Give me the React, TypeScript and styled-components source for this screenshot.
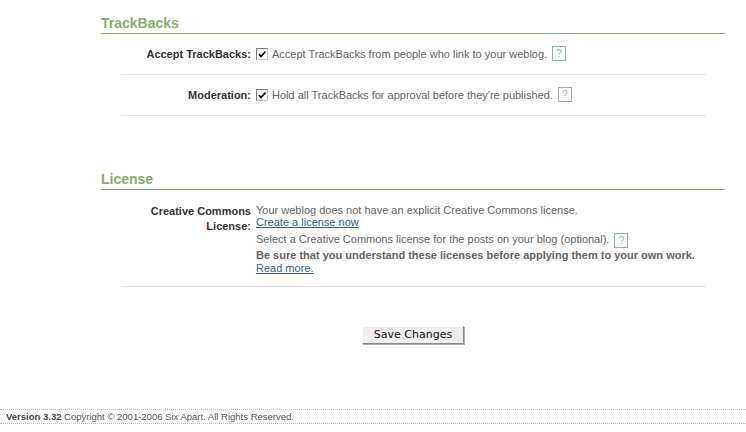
import styled, { createGlobalStyle } from "styled-components";

const GlobalStyle = createGlobalStyle`
  html, body {
    margin: 0;
    padding: 0;
    background: #ffffff;
  }
  body {
    font-family: "Liberation Sans", Arial, sans-serif;
    font-size: 11px;
    color: #636363;
  }
`;

const CheckMark = () => (
  <svg width="10" height="10" viewBox="0 0 10 10">
    <polyline
      points="2,5 4,7.5 8.5,2.5"
      fill="none"
      stroke="#000"
      strokeWidth="1.6"
    />
  </svg>
);

const App = () => {
  return (
    <>
      <GlobalStyle />
      <Page>
        <Section>
          <SectionTitle>TrackBacks</SectionTitle>
          <Row>
            <Label>Accept TrackBacks:</Label>
            <Value>
              <CheckLine>
                <Box>
                  <CheckMark />
                </Box>
                Accept TrackBacks from people who link to your weblog.
                <Help>?</Help>
              </CheckLine>
            </Value>
          </Row>
          <Row>
            <Label>Moderation:</Label>
            <Value>
              <CheckLine>
                <Box>
                  <CheckMark />
                </Box>
                Hold all TrackBacks for approval before they're published.
                <Help>?</Help>
              </CheckLine>
            </Value>
          </Row>
        </Section>

        <Section $top={55}>
          <SectionTitle>License</SectionTitle>
          <Row $top>
            <Label $tall>
              Creative Commons
              <br />
              License:
            </Label>
            <Value>
              <Line $h={12}>
                Your weblog does not have an explicit Creative Commons license.
              </Line>
              <Line $h={12}>
                <Link href="#">Create a license now</Link>
              </Line>
              <Line $h={16} $gap={3}>
                Select a Creative Commons license for the posts on your blog
                (optional).
                <Help>?</Help>
              </Line>
              <Line $h={14}>
                <strong>
                  Be sure that you understand these licenses before applying
                  them to your own work.
                </strong>
              </Line>
              <Line $h={12}>
                <Link href="#">Read more.</Link>
              </Line>
            </Value>
          </Row>
        </Section>

        <Actions>
          <SaveButton type="button">Save Changes</SaveButton>
        </Actions>
      </Page>
      <Footer>
        <b>Version 3.32</b> Copyright © 2001-2006 Six Apart. All Rights
        Reserved.
      </Footer>
    </>
  );
};

export default App;

const Page = styled.div`
  width: 624px;
  margin-left: 101px;
  padding-top: 15px;
`;

const Section = styled.div<{ $top?: number }>`
  margin-top: ${(p) => p.$top || 0}px;
`;

const SectionTitle = styled.h2`
  margin: 0;
  font-size: 14px;
  line-height: 17px;
  font-weight: bold;
  color: #8aab6a;
  padding-bottom: 1px;
  border-bottom: 1px solid #8fa870;
`;

const Row = styled.div<{ $top?: boolean }>`
  margin: 0 19px 0 20px;
  display: grid;
  grid-template-columns: 130px 1fr;
  column-gap: 5px;
  align-items: ${(p) => (p.$top ? "start" : "center")};
  padding: ${(p) => (p.$top ? "14px 0 12px" : "12px 0 13px")};
  border-bottom: 1px solid #e6e6d8;
`;

const Label = styled.div<{ $tall?: boolean }>`
  text-align: right;
  font-weight: bold;
  color: #333333;
  line-height: ${(p) => (p.$tall ? "15px" : "14px")};
`;

const Value = styled.div`
  color: #636363;
`;

const CheckLine = styled.div`
  display: flex;
  align-items: center;
  line-height: 14px;
`;

const Box = styled.span`
  width: 10px;
  height: 10px;
  border: 1px solid;
  border-color: #7a7a7a #c8c8c8 #c8c8c8 #7a7a7a;
  background: #ffffff;
  display: inline-flex;
  align-items: center;
  justify-content: center;
  margin-right: 4px;
`;

const Help = styled.span`
  display: inline-block;
  box-sizing: border-box;
  width: 14px;
  height: 15px;
  margin-left: 5px;
  border: 1px solid #8fb2c4;
  color: #8fb2c4;
  font-size: 10px;
  line-height: 13px;
  text-align: center;
  vertical-align: middle;
`;

const Line = styled.div<{ $h: number; $gap?: number }>`
  line-height: ${(p) => p.$h}px;
  margin-top: ${(p) => p.$gap || 0}px;
  white-space: nowrap;
`;

const Link = styled.a`
  color: #33608c;
  text-decoration: underline;
`;

const Actions = styled.div`
  display: flex;
  justify-content: center;
  padding-top: 39px;
`;

const SaveButton = styled.button`
  font-family: "DejaVu Sans", Verdana, sans-serif;
  font-size: 11px;
  color: #111111;
  background: #f0ecf0;
  height: 18px;
  padding: 0 11px;
  line-height: 15px;
  border: 1px solid;
  border-color: #ffffff #8a8a8a #8a8a8a #ffffff;
  box-shadow: 1px 1px 0 #b0b0b0;
  border-radius: 0;
`;

const Footer = styled.div`
  margin-top: 65px;
  border-top: 1px dotted #bbbbbb;
  border-bottom: 1px dotted #bbbbbb;
  padding-left: 6px;
  font-size: 9.5px;
  line-height: 13px;
  color: #555555;

  b {
    color: #444444;
  }
`;
